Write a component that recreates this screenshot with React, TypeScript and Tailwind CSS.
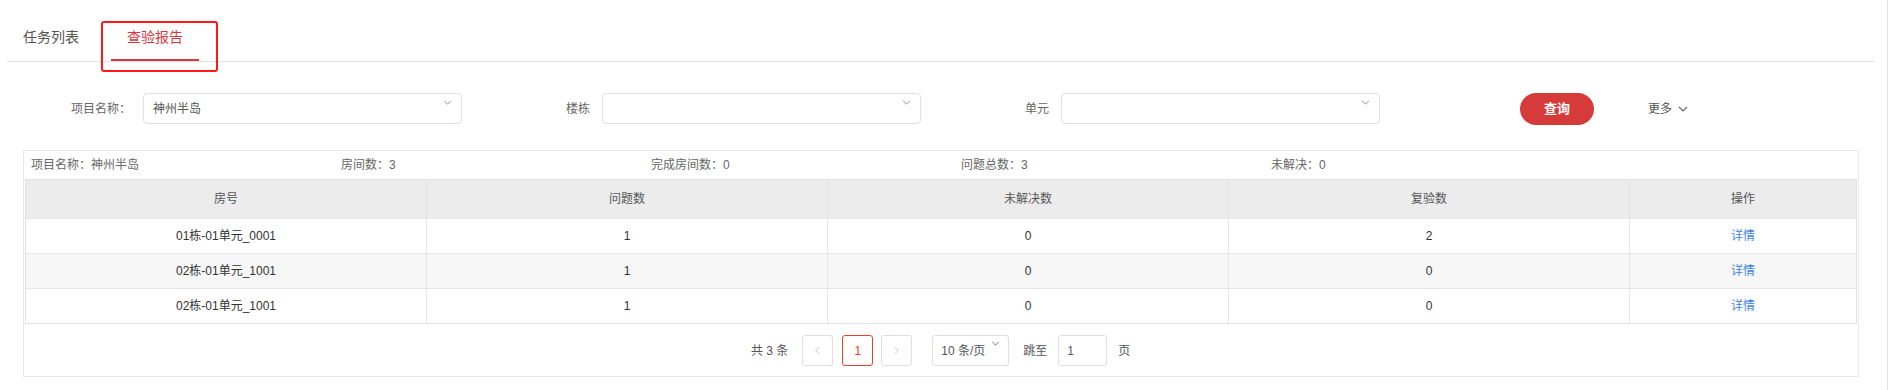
import React from 'react';

const FONT = '"Liberation Sans", "Noto Sans CJK SC", sans-serif';

type Row = { room: string; issues: number; open: number; recheck: number };

const rows: Row[] = [
  { room: '01栋-01单元_0001', issues: 1, open: 0, recheck: 2 },
  { room: '02栋-01单元_1001', issues: 1, open: 0, recheck: 0 },
  { room: '02栋-01单元_1001', issues: 1, open: 0, recheck: 0 },
];

function Chevron({ className = '' }: { className?: string }) {
  return (
    <svg viewBox="0 0 10 6" className={className} fill="none" stroke="currentColor" strokeWidth="1.2">
      <path d="M1 1l4 4 4-4" />
    </svg>
  );
}

function Select({ value }: { value?: string }) {
  return (
    <div className="relative h-[31px] w-[319px] rounded-[4px] border border-[#dcdfe6] bg-white">
      <span className="absolute left-[9px] top-[8px] text-[12px] leading-[14px] text-[#555]">{value}</span>
      <Chevron className="absolute right-[9px] top-[6px] h-[5px] w-[9px] text-[#8a8f99]" />
    </div>
  );
}

function FormItem({ label, value }: { label: string; value?: string }) {
  return (
    <div className="flex w-[459px] items-center">
      <div className="w-[140px] pr-[12px] text-right text-[12px] text-[#666]">{label}</div>
      <Select value={value} />
    </div>
  );
}

export default function App() {
  return (
    <div className="relative h-[390px] w-full bg-white" style={{ fontFamily: FONT }}>
      <div className="h-full w-[1888px] border-r border-[#e4e4e4]">
        {/* tabs */}
        <div className="ml-[7px] mr-[12px] flex h-[62px] items-end border-b border-[#e0e0e0] pt-[27px]">
          <div className="flex h-[35px] w-[88px] items-start justify-center pt-[1px] text-[14px] text-[#555]">任务列表</div>
          <div className="ml-[16px] flex h-[35px] w-[88px] items-start justify-center border-b-2 border-[#d9363e] pt-[1px] text-[14px] text-[#d9363e]">
            查验报告
          </div>
        </div>

        {/* filters */}
        <div className="mt-[31px] flex h-[31px] items-center pl-[3px]">
          <FormItem label="项目名称：" value="神州半岛" />
          <FormItem label="楼栋" />
          <FormItem label="单元" />
          <div className="ml-[140px] flex h-[32px] w-[74px] items-center justify-center rounded-full bg-[#d63b3b] text-[13px] font-bold text-white">
            查询
          </div>
          <div className="ml-[54px] flex items-center gap-[6px] text-[12px] text-[#555]">
            更多
            <Chevron className="h-[6px] w-[10px] text-[#666]" />
          </div>
        </div>

        {/* table box */}
        <div className="ml-[23px] mt-[26px] h-[227px] w-[1836px] border border-[#e8e8e8]">
          <div className="flex h-[28px] items-center pl-[7px] text-[12px] text-[#666]">
            <div className="w-[310px]">项目名称：神州半岛</div>
            <div className="w-[310px]">房间数：3</div>
            <div className="w-[310px]">完成房间数：0</div>
            <div className="w-[310px]">问题总数：3</div>
            <div className="w-[310px]">未解决：0</div>
          </div>
          <div className="mx-[1px] border border-[#e2e2e2]">
            <div className="flex h-[38px] bg-[#ececec] text-[12px] text-[#555]">
              {['房号', '问题数', '未解决数', '复验数'].map((h) => (
                <div key={h} className="flex w-[401px] items-center justify-center border-r border-[#e2e2e2]">
                  {h}
                </div>
              ))}
              <div className="flex flex-1 items-center justify-center">操作</div>
            </div>
            {rows.map((r, i) => (
              <div
                key={i}
                className={`flex h-[35px] border-t border-[#e6e6e6] text-[12px] text-[#333] ${i === 1 ? 'bg-[#f7f7f7]' : 'bg-white'}`}
              >
                <div className="flex w-[401px] items-center justify-center border-r border-[#e6e6e6]">{r.room}</div>
                <div className="flex w-[401px] items-center justify-center border-r border-[#e6e6e6]">{r.issues}</div>
                <div className="flex w-[401px] items-center justify-center border-r border-[#e6e6e6]">{r.open}</div>
                <div className="flex w-[401px] items-center justify-center border-r border-[#e6e6e6]">{r.recheck}</div>
                <div className="flex flex-1 items-center justify-center text-[#3d7fe6]">详情</div>
              </div>
            ))}
          </div>

          {/* pagination */}
          <div className="flex h-[53px] items-center pl-[727px] text-[12px] text-[#555]">
            <span>共 3 条</span>
            <div className="ml-[14px] flex h-[31px] w-[31px] items-center justify-center rounded-[3px] border border-[#dcdfe6] text-[#c0c4cc]">
              <svg viewBox="0 0 6 10" className="h-[9px] w-[5px]" fill="none" stroke="currentColor" strokeWidth="1.2">
                <path d="M5 1L1 5l4 4" />
              </svg>
            </div>
            <div className="ml-[9px] flex h-[31px] w-[31px] items-center justify-center rounded-[3px] border border-[#e8402c] text-[#e8402c]">
              1
            </div>
            <div className="ml-[8px] flex h-[31px] w-[31px] items-center justify-center rounded-[3px] border border-[#dcdfe6] text-[#c0c4cc]">
              <svg viewBox="0 0 6 10" className="h-[9px] w-[5px]" fill="none" stroke="currentColor" strokeWidth="1.2">
                <path d="M1 1l4 4-4 4" />
              </svg>
            </div>
            <div className="relative ml-[20px] flex h-[31px] w-[77px] items-center rounded-[3px] border border-[#dcdfe6] pl-[8px]">
              10 条/页
              <Chevron className="absolute right-[8px] top-[5px] h-[5px] w-[9px] text-[#777]" />
            </div>
            <span className="ml-[14px]">跳至</span>
            <div className="ml-[11px] flex h-[31px] w-[49px] items-center rounded-[3px] border border-[#dcdfe6] pl-[8px]">1</div>
            <span className="ml-[11px]">页</span>
          </div>
        </div>
      </div>

      {/* annotation box */}
      <div className="pointer-events-none absolute left-[101px] top-[21px] h-[51px] w-[117px] rounded-[3px] border-2 border-[#ff1a1a]" />
    </div>
  );
}
